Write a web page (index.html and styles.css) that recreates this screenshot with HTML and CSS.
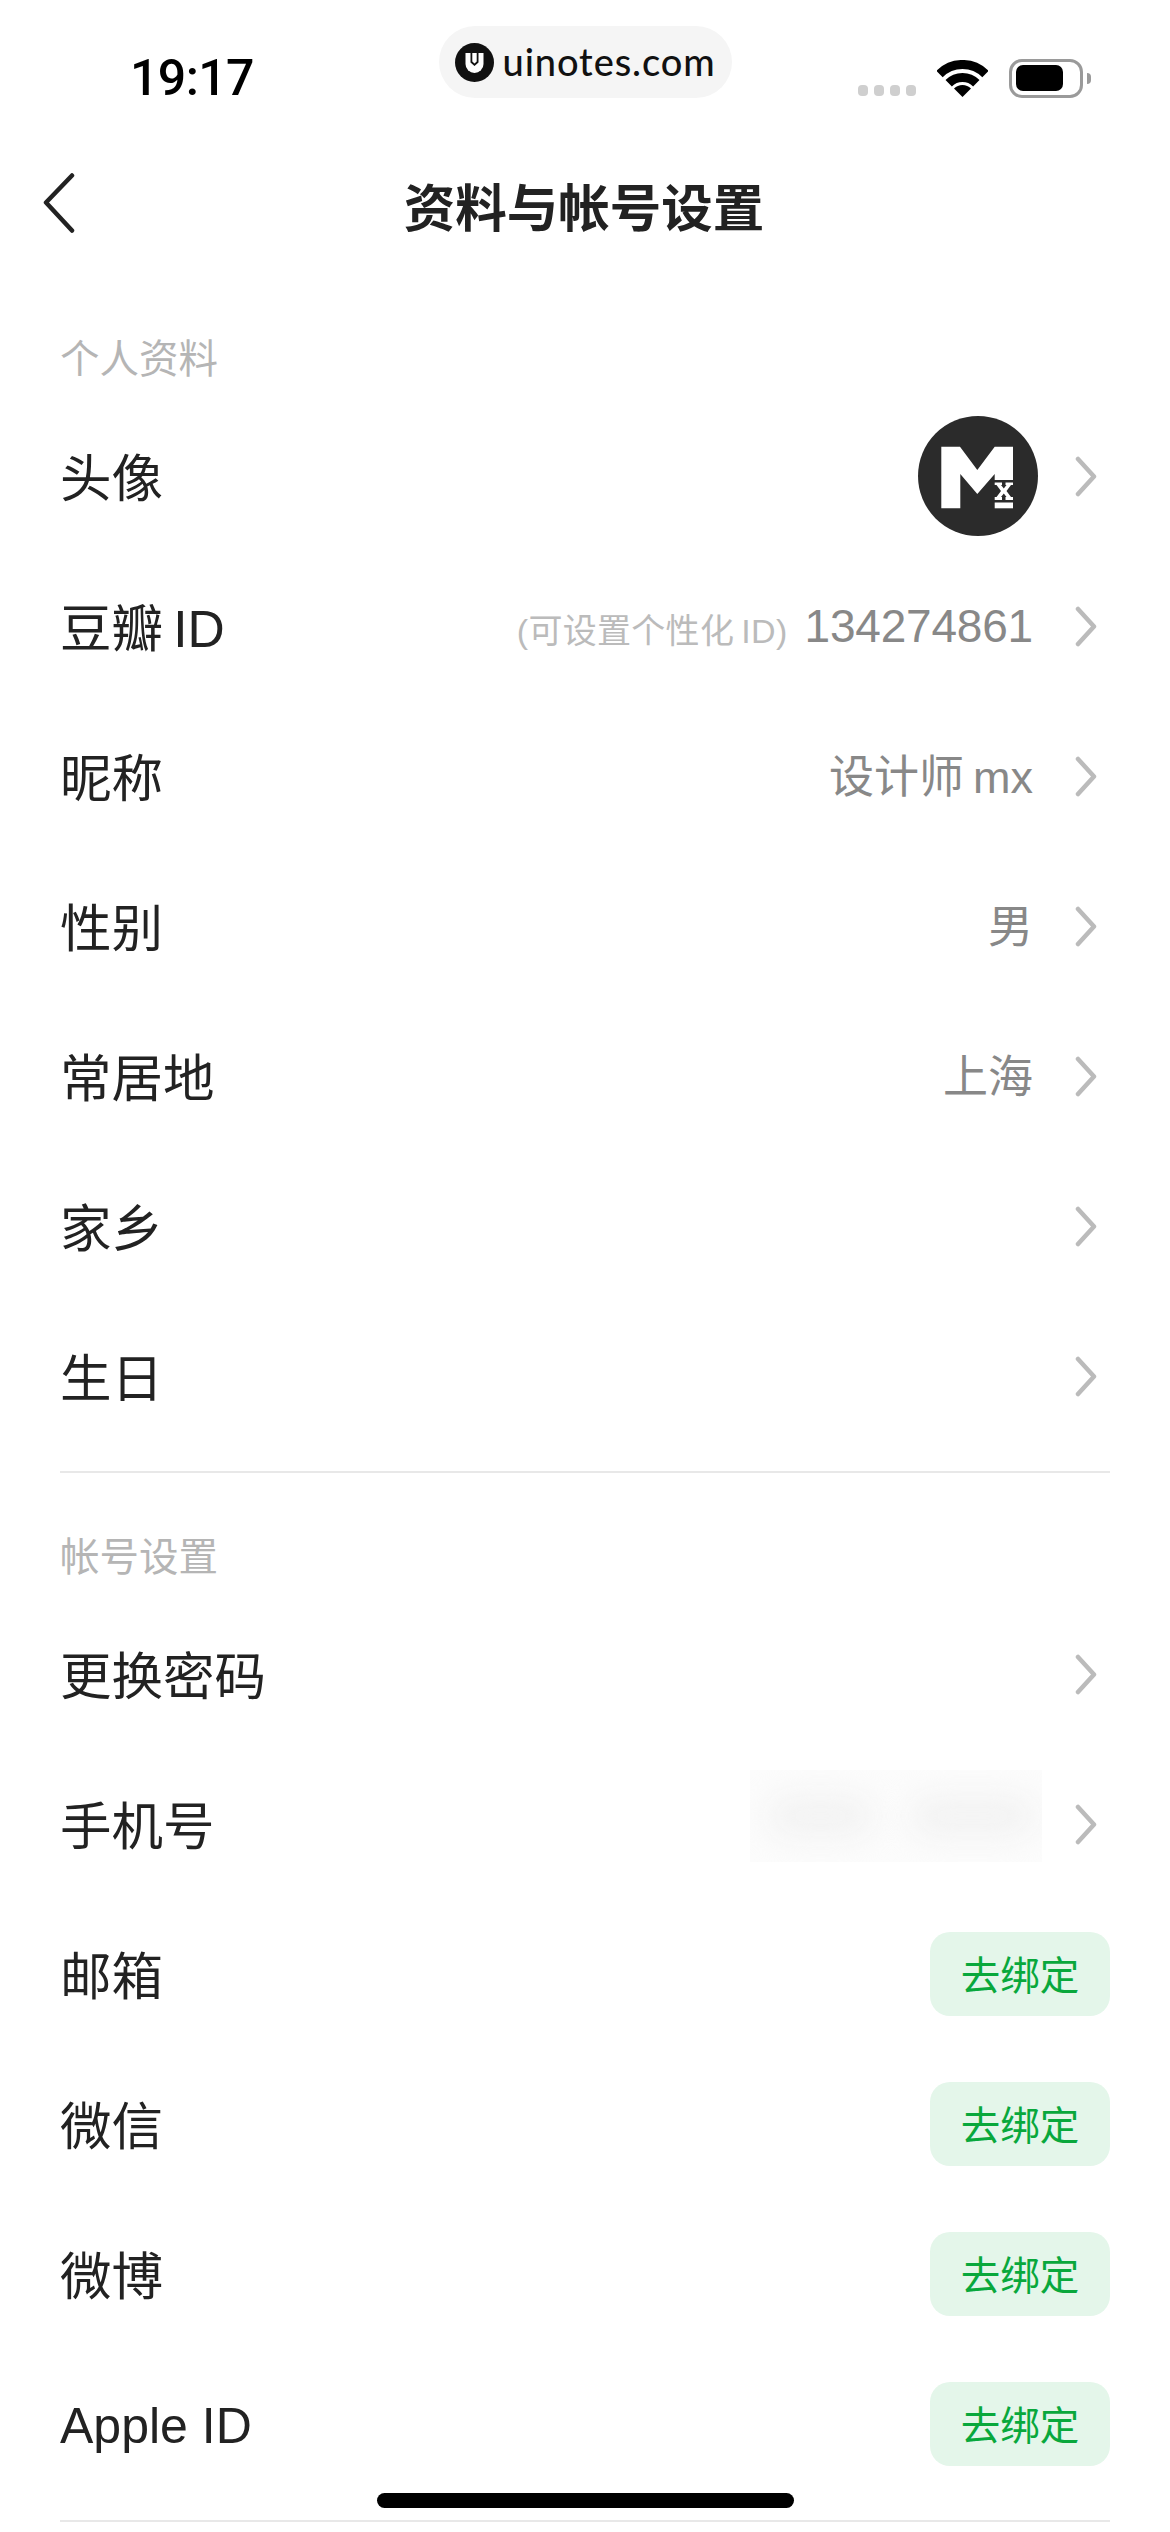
FILE: index.html
```html
<!DOCTYPE html>
<html lang="zh-CN">
<head>
<meta charset="utf-8">
<title>资料与帐号设置</title>
<link rel="stylesheet" href="styles.css">
</head>
<body>
<div class="screen">
  <div class="status">
    <div class="time">19:17</div>
    <div class="pill">
      <svg class="pill-logo" viewBox="0 0 39 39"><circle cx="19.5" cy="19.5" r="19.5" fill="#111"/><path d="M10.5 10h18v11a9 9 0 0 1-18 0z" fill="#fff"/><path d="M15.5 10v9.5l4 3.5 4-3.5V10h-1.8v8.5l-2.2 2-2.2-2V10z" fill="#111"/></svg>
      <span class="pill-text">uinotes.com</span>
    </div>
    <div class="status-right">
      <div class="signal"><i></i><i></i><i></i><i></i></div>
      <svg class="wifi" viewBox="0 0 51 37"><path d="M2.5 14A32.500 32.500 0 0 1 48.500 14" fill="none" stroke="#000" stroke-width="9"/><path d="M11.700 23.200A19.500 19.500 0 0 1 39.300 23.200" fill="none" stroke="#000" stroke-width="9"/><path d="M25.500 37L17 28.500A12 12 0 0 1 34 28.500Z" fill="#000"/></svg>
      <div class="battery"><div class="battery-fill"></div></div>
      <div class="battery-nub"></div>
    </div>
  </div>

  <div class="nav">
    <svg class="back" viewBox="0 0 32 60"><path d="M29 2.500L3 29.500L29 57.500" fill="none" stroke="#222" stroke-width="4.500" stroke-linecap="round" stroke-linejoin="round"/></svg>
    <div class="title">资料与帐号设置</div>
  </div>

  <section class="group group-first">
    <div class="group-label">个人资料</div>
    <div class="row">
      <span class="row-label">头像</span>
      <svg class="avatar" viewBox="0 0 120 120"><circle cx="60" cy="60" r="60" fill="#2b2b2b"/><path d="M23.300 30.700H42L59.300 54L76.700 30.700H95V64H76.700V58L59.300 78L42.300 58V92.300H23.300Z" fill="#fff"/><path d="M76.700 66.500H84V69H83L85.800 72.500L88.500 69H87.500V66.500H95V69H93L88.500 75L93 81H95V84H87.500V81H88.500L85.800 77.500L83 81H84V84H76.700V81H78.500L83 75L78.500 69H76.700Z" fill="#fff"/><rect x="76.700" y="86.500" width="18.300" height="5.800" fill="#fff"/></svg>
      <svg class="chev" viewBox="0 0 22 41"><path d="M3 3L19 20.500L3 38" /></svg>
    </div>
    <div class="row">
      <span class="row-label">豆瓣&#8201;ID</span>
      <span class="hint">(可设置个性化&#8201;ID)</span>
      <span class="value value-num">134274861</span>
      <svg class="chev" viewBox="0 0 22 41"><path d="M3 3L19 20.500L3 38" /></svg>
    </div>
    <div class="row">
      <span class="row-label">昵称</span>
      <span class="value">设计师&#8201;mx</span>
      <svg class="chev" viewBox="0 0 22 41"><path d="M3 3L19 20.500L3 38" /></svg>
    </div>
    <div class="row">
      <span class="row-label">性别</span>
      <span class="value">男</span>
      <svg class="chev" viewBox="0 0 22 41"><path d="M3 3L19 20.500L3 38" /></svg>
    </div>
    <div class="row">
      <span class="row-label">常居地</span>
      <span class="value">上海</span>
      <svg class="chev" viewBox="0 0 22 41"><path d="M3 3L19 20.500L3 38" /></svg>
    </div>
    <div class="row">
      <span class="row-label">家乡</span>
      <svg class="chev" viewBox="0 0 22 41"><path d="M3 3L19 20.500L3 38" /></svg>
    </div>
    <div class="row">
      <span class="row-label">生日</span>
      <svg class="chev" viewBox="0 0 22 41"><path d="M3 3L19 20.500L3 38" /></svg>
    </div>
  </section>
  <div class="divider"></div>

  <section class="group">
    <div class="group-label">帐号设置</div>
    <div class="row">
      <span class="row-label">更换密码</span>
      <svg class="chev" viewBox="0 0 22 41"><path d="M3 3L19 20.500L3 38" /></svg>
    </div>
    <div class="row">
      <span class="row-label">手机号</span>
      <div class="masked"><i class="blob blob-a"></i><i class="blob blob-b"></i></div>
      <svg class="chev" viewBox="0 0 22 41"><path d="M3 3L19 20.500L3 38" /></svg>
    </div>
    <div class="row">
      <span class="row-label">邮箱</span>
      <span class="bind">去绑定</span>
    </div>
    <div class="row">
      <span class="row-label">微信</span>
      <span class="bind">去绑定</span>
    </div>
    <div class="row">
      <span class="row-label">微博</span>
      <span class="bind">去绑定</span>
    </div>
    <div class="row">
      <span class="row-label row-label-latin">Apple ID</span>
      <span class="bind">去绑定</span>
    </div>
  </section>
  <div class="divider divider-last"></div>

  <div class="home-bar"></div>
</div>
</body>
</html>
```

FILE: styles.css
```css
* { box-sizing: border-box; }
html, body { margin: 0; padding: 0; background: #fff; }
body {
  font-family: "Liberation Sans", "Noto Sans CJK SC", sans-serif;
  color: #222;
}
.screen {
  position: relative;
  width: 1170px;
  height: 2532px;
  overflow: hidden;
  background: #fff;
}

/* status bar */
.status {
  display: grid;
  grid-template-columns: 1fr 293px 1fr;
  align-items: center;
  height: 156px;
}
.time {
  padding-left: 130px;
  font-family: Roboto, "Liberation Sans", sans-serif;
  font-size: 50px;
  font-weight: 500;
  color: #000;
  letter-spacing: -0.6px;
}
.pill {
  display: flex;
  align-items: center;
  align-self: start;
  gap: 9px;
  height: 72px;
  margin-top: 26px;
  padding-left: 16px;
  border-radius: 36px;
  background: #f5f5f5;
}
.pill-logo { width: 39px; height: 39px; flex: none; }
.pill-text {
  padding-bottom: 3px;
  font-family: Lato, sans-serif;
  font-size: 38px;
  font-weight: 500;
  color: #111;
  letter-spacing: 0.9px;
}
.status-right {
  display: flex;
  align-items: center;
  justify-content: flex-end;
  padding-right: 79px;
}
.signal { display: flex; gap: 6px; margin: 24px 21px 0 0; }
.signal i { width: 10px; height: 11px; border-radius: 4px; background: #cfcfcf; }
.wifi { width: 51px; height: 37px; margin-right: 21px; }
.battery {
  width: 74px;
  height: 39px;
  padding: 3px 17px 4px 4px;
  border: 3px solid #9a9a9a;
  border-radius: 13px;
}
.battery-fill { width: 100%; height: 100%; border-radius: 7px; background: #000; }
.battery-nub {
  width: 4px;
  height: 11px;
  margin-left: 4px;
  border-radius: 0 6px 6px 0;
  background: #9a9a9a;
}

/* nav */
.nav {
  position: relative;
  display: flex;
  align-items: center;
  justify-content: center;
  height: 102px;
  padding: 0 2px 6px 0;
}
.back {
  position: absolute;
  left: 43px;
  top: 17px;
  width: 32px;
  height: 60px;
}
.title { font-size: 51.500px; font-weight: 700; color: #222; }

/* groups */
.group-first { padding-top: 69px; }
.group-label {
  display: flex;
  align-items: center;
  height: 60px;
  margin-bottom: 14px;
  padding: 0 0 4px 60px;
  font-size: 39.500px;
  color: #b5b5b5;
}
.row {
  display: flex;
  align-items: center;
  height: 150px;
  padding: 0 60px;
}
.row-label { margin-right: auto; padding-bottom: 3px; font-size: 51.500px; color: #222; }
.row-label-latin { padding: 3px 0 0; font-size: 50px; }
.value { padding-bottom: 6px; font-size: 45px; color: #888; margin-right: 42px; }
.value-num { padding-bottom: 0; font-size: 46px; letter-spacing: -0.2px; }
.hint { padding-top: 4px; font-size: 34px; letter-spacing: 0.3px; color: #bbb; margin-right: 17px; }
.avatar { width: 120px; height: 120px; margin-right: 37px; }
.chev {
  flex: none;
  width: 22px;
  height: 41px;
  margin-right: 13px;
}
.chev path {
  fill: none;
  stroke: #bbb;
  stroke-width: 4.500px;
  stroke-linecap: round;
  stroke-linejoin: round;
}
.bind {
  display: flex;
  align-items: center;
  justify-content: center;
  width: 180px;
  height: 84px;
  padding-bottom: 4px;
  border-radius: 20px;
  background: #e4f6ea;
  color: #09a83c;
  font-size: 39.500px;
}
.masked {
  position: relative;
  width: 292px;
  height: 92px;
  margin: 0 33px 16px 0;
  overflow: hidden;
  background: #fcfcfc;
}
.blob {
  position: absolute;
  top: 26px;
  height: 40px;
  border-radius: 20px;
  background: #f2f2f2;
  filter: blur(16px);
}
.blob-a { left: 18px; width: 105px; }
.blob-b { left: 160px; width: 125px; }
.divider {
  height: 2px;
  margin: 20px 60px 52px;
  background: #e8e8e8;
}
.divider-last { margin: 21px 60px 0; }

/* home indicator */
.home-bar {
  position: absolute;
  left: 377px;
  top: 2493px;
  width: 417px;
  height: 15px;
  border-radius: 8px;
  background: #000;
}
```
